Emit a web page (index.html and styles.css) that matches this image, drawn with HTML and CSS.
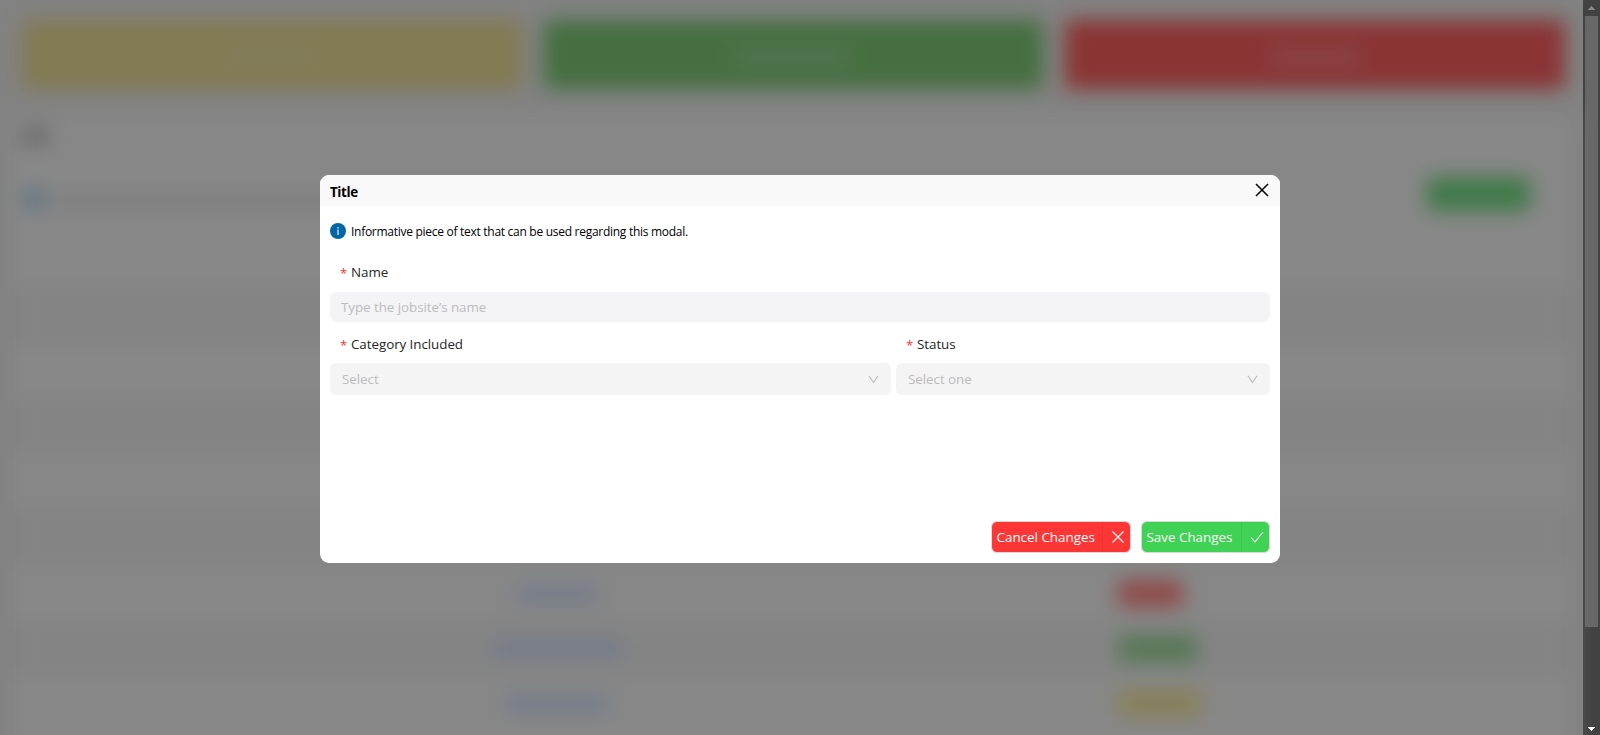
FILE: index.html
```html
<!DOCTYPE html>
<html lang="en">
<head>
<meta charset="utf-8">
<title>Title</title>
<link rel="stylesheet" href="styles.css">
</head>
<body>
<div class="screen">
  <div class="page">
    <div class="cards">
      <div class="card yellow"><i class="smudge s1"></i></div>
      <div class="card green"><i class="smudge s2"></i></div>
      <div class="card red"><i class="smudge s1"></i></div>
    </div>
    <div class="panel">
      <div class="heading"><i></i></div>
      <div class="toolbar">
        <i class="dot"></i><i class="line"></i><i class="action"></i>
      </div>
      <div class="rows">
        <div class="row dark tall"></div>
        <div class="row short"></div>
        <div class="row dark"></div>
        <div class="row short"></div>
        <div class="row dark tall"></div>
        <div class="row"><i class="link l1"></i><i class="tag t-red"></i></div>
        <div class="row dark"><i class="link l2"></i><i class="tag t-green"></i></div>
        <div class="row"><i class="link l3"></i><i class="tag t-yellow"></i></div>
      </div>
    </div>
  </div>
  <div class="scrollbar">
    <svg class="arrow" viewBox="0 0 17 16" shape-rendering="crispEdges"><path d="M8 6h1v1h1v1h1v1h1v1H5V9h1V8h1V7h1z" fill="#868686"/></svg>
    <div class="thumb"></div>
    <svg class="arrow" viewBox="0 0 17 16" shape-rendering="crispEdges"><path d="M5 8h7v1h-1v1h-1v1H9v1H8v-1H7v-1H6V9H5z" fill="#fff"/></svg>
  </div>
</div>

<div class="overlay">
  <div class="modal">
    <div class="modal-head">
      <span class="title">Title</span>
      <svg class="close" viewBox="0 0 14 14"><path d="M1 1L13 13M13 1L1 13"/></svg>
    </div>
    <div class="modal-body">
      <div class="info">
        <svg class="info-icon" viewBox="0 0 16 16"><circle cx="8" cy="8" r="8" fill="#0066a6"/><path d="M7.3 4h1.4v1.4H7.3zM7.3 6.4h1.4V12H7.3z" fill="#cfe3f0"/></svg>
        <span class="info-text">Informative piece of text that can be used regarding this modal.</span>
      </div>
      <div class="field">
        <div class="label"><b>*</b><span>Name</span></div>
        <div class="input"><span>Type the jobsite’s name</span></div>
      </div>
      <div class="pair">
        <div class="field">
          <div class="label"><b>*</b><span>Category Included</span></div>
          <div class="select"><span>Select</span><svg class="chev" viewBox="0 0 12 10"><path d="M1 1L6 8.4L11 1"/></svg></div>
        </div>
        <div class="field">
          <div class="label"><b>*</b><span>Status</span></div>
          <div class="select"><span>Select one</span><svg class="chev" viewBox="0 0 12 10"><path d="M1 1L6 8.4L11 1"/></svg></div>
        </div>
      </div>
    </div>
    <div class="modal-foot">
      <div class="btn cancel"><span class="btn-text">Cancel Changes</span><span class="btn-icon"><svg viewBox="0 0 14 14"><path d="M1.5 1.5L12.5 12.5M12.5 1.5L1.5 12.5"/></svg></span></div>
      <div class="btn save"><span class="btn-text">Save Changes</span><span class="btn-icon"><svg viewBox="0 0 14 14"><path d="M1 7.5L5 12L13 2"/></svg></span></div>
    </div>
  </div>
</div>
</body>
</html>
```
FILE: styles.css
```css
* { box-sizing: border-box; }
body {
  margin: 0;
  background: #828282;
  font-family: "Open Sans", "Noto Sans", sans-serif;
  font-size: 13.4px;
  letter-spacing: -.06px;
  overflow: hidden;
}
i { display: block; }
.screen { display: flex; height: 735px; overflow: hidden; background: #828282; }
.page { flex: 1; height: 735px; filter: blur(10px); }

.cards { display: grid; grid-template-columns: repeat(3, 1fr); gap: 22px; padding: 20px 18px 0 22px; height: 89px; }
.card { border-radius: 5px; display: flex; align-items: center; justify-content: center; }
.yellow { background: #827a52; }
.green { background: #456f41; }
.red { background: #8a3434; }
.smudge { height: 18px; margin-top: 4px; background: rgba(140, 140, 140, .2); }
.s1 { width: 92px; }
.s2 { width: 116px; }

.panel { margin: 26px 10px 0; background: #878787; height: 660px; }
.heading { padding: 14px 0 0 12px; height: 62px; }
.heading i { width: 27px; height: 15px; background: #666; }
.toolbar { display: flex; align-items: flex-start; height: 110px; padding: 0 43px 0 15px; }
.dot { width: 18px; height: 18px; margin-top: 13px; border-radius: 50%; background: #4c6c80; }
.line { width: 320px; height: 12px; margin: 18px 0 0 7px; background: #7c7c7c; }
.action { width: 103px; height: 34px; margin-left: auto; border-radius: 6px; background: #407a48; }
.row { display: grid; grid-template-columns: 1094px 1fr; align-items: center; height: 55px; }
.row.dark { background: #848484; }
.row.tall { height: 60px; }
.row.short { height: 52px; }
.link { height: 16px; justify-self: center; background: #727a8a; }
.l1 { width: 80px; }
.l2 { width: 130px; }
.l3 { width: 102px; }
.tag { height: 27px; margin-left: 14px; border-radius: 5px; }
.t-red { width: 65px; background: #8f4a4a; }
.t-green { width: 80px; background: #567856; }
.t-yellow { width: 84px; background: #888058; }

.scrollbar { width: 17px; background: #424242; display: flex; flex-direction: column; }
.arrow { width: 17px; height: 16px; flex: none; }
.thumb { height: 611px; margin: 0 2px; background: #686868; }
.scrollbar .arrow:last-child { margin-top: auto; }

/* The dialog lies over the blurred page */
.overlay { position: absolute; inset: 0; display: flex; justify-content: center; align-items: flex-start; padding-top: 175px; }
.modal { width: 960px; height: 388px; display: flex; flex-direction: column; background: #fff; border-radius: 9px; overflow: hidden; }
.modal-head { display: flex; justify-content: space-between; align-items: center; height: 31px; padding: 0 11px 0 10px; background: #f9f9f9; }
.title { font-weight: 700; font-size: 13.4px; letter-spacing: -.4px; color: #000; line-height: 18px; padding-top: 2px; }
.close { width: 14px; height: 14px; margin-bottom: 1px; fill: none; stroke: #000; stroke-width: 1.5; }
.modal-body { flex: 1; padding: 17px 10px 0; }
.info { display: flex; align-items: center; gap: 5px; height: 16px; }
.info-icon { width: 16px; height: 16px; }
.info-text { font-size: 12px; letter-spacing: -.28px; color: #000; line-height: 16px; white-space: nowrap; padding-top: 2px; }
.label { display: flex; align-items: center; height: 22px; line-height: 18px; padding-left: 10px; color: #262626; white-space: nowrap; }
.label b { width: 11px; font-weight: 400; font-size: 13px; padding-top: 1px; color: #ff3030; }
.modal-body > .field { margin-top: 22px; }
.input, .select { display: flex; align-items: center; justify-content: space-between; line-height: 18px; padding: 0 12px; border-radius: 6px; color: #bcbcbc; }
.input { height: 30px; margin-top: 9px; padding-left: 11px; background: #f4f4f7; }
.select { height: 32px; margin-top: 8px; background: #f4f4f4; }
.pair { display: grid; grid-template-columns: 561px 374px; gap: 5px; margin-top: 11px; }
.chev { width: 11px; height: 9px; fill: none; stroke: #bcbcbc; stroke-width: 1.2; }
.modal-foot { display: flex; justify-content: flex-end; gap: 10px; padding: 0 10px 10px; }
.btn { display: flex; height: 32px; border: 1px solid #d9d9d9; border-radius: 6px; overflow: hidden; color: #fff; line-height: 18px; }
.cancel { width: 140px; background: #ff3636; }
.save { width: 129px; background: #40d255; }
.btn-text { flex: 1; display: flex; align-items: center; padding-left: 4.5px; letter-spacing: 0; white-space: nowrap; }
.btn-icon { width: 28px; padding-left: 2px; border-left: 1px solid rgba(0, 0, 0, .06); display: flex; align-items: center; justify-content: center; }
.btn-icon svg { width: 14px; height: 14px; fill: none; stroke: #fff; stroke-width: 1.1; }
```
